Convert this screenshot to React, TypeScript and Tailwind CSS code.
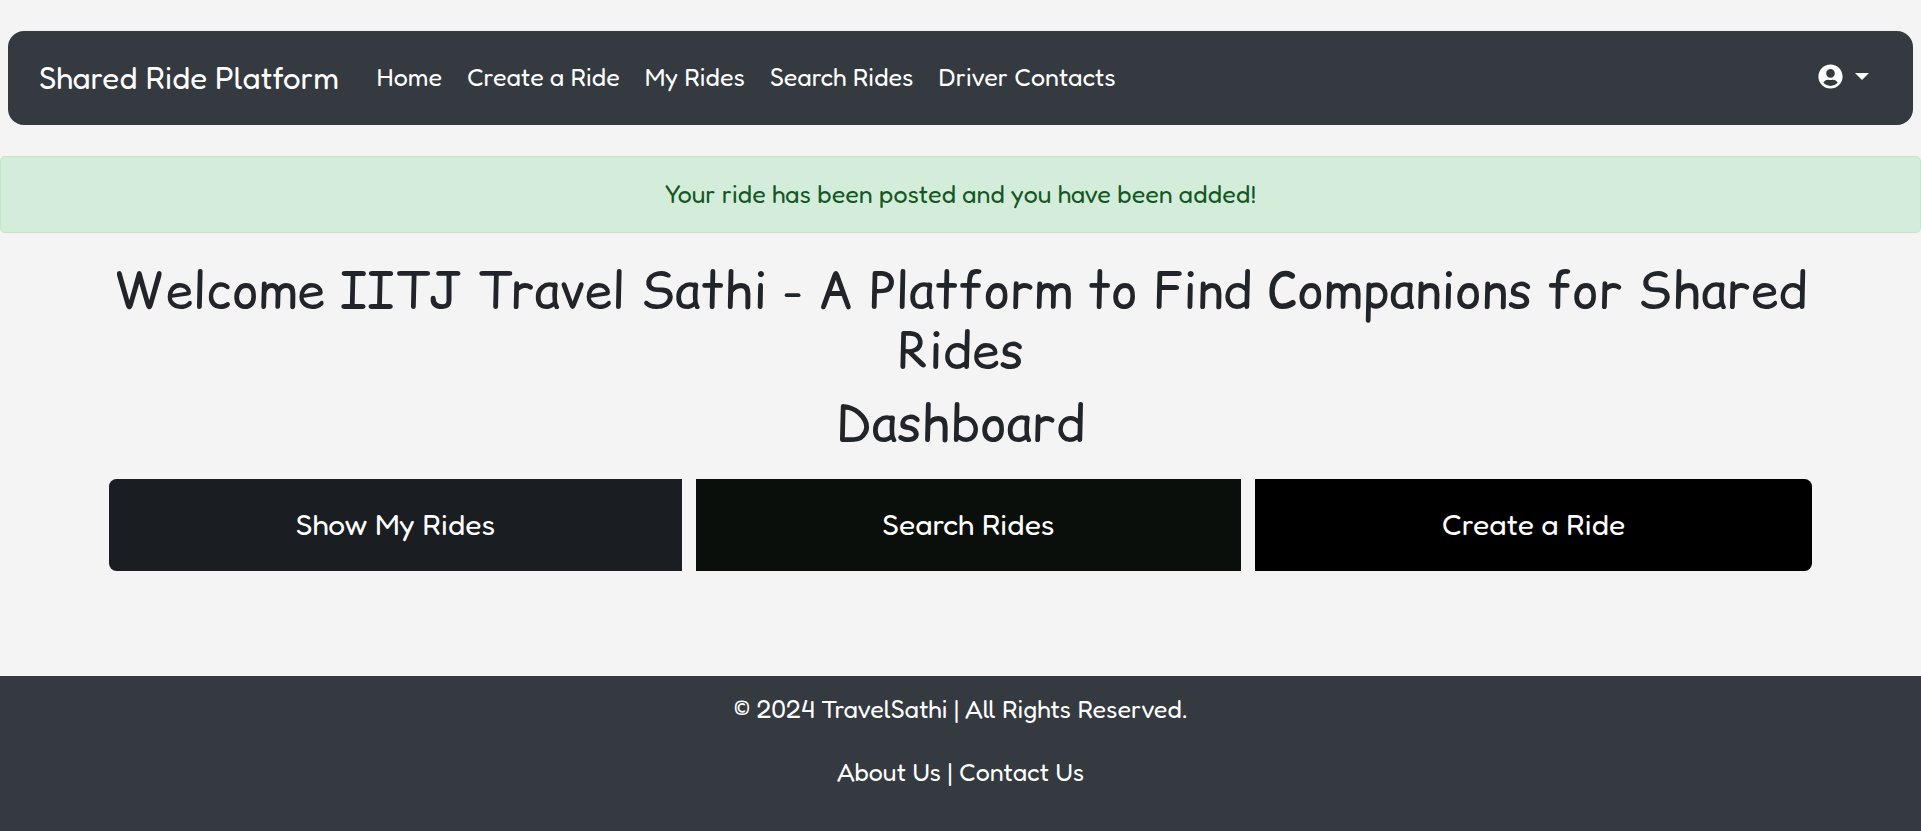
import { FaUserCircle } from "react-icons/fa";

const links = ["Home", "Create a Ride", "My Rides", "Search Rides", "Driver Contacts"];

function Navbar() {
  return (
    <nav className="mx-2 flex h-[94px] items-center rounded-2xl bg-[#343a40] px-[31px] text-white">
      <a href="#" className="mr-[25px] pb-px text-[31.25px] whitespace-nowrap">Shared Ride Platform</a>
      <ul className="flex grow items-center pb-px">
        {links.map((label) => (
          <li key={label}>
            <a href="#" className="block px-[12.5px] whitespace-nowrap">{label}</a>
          </li>
        ))}
      </ul>
      <button aria-label="Account" className="mr-[13px] flex items-center gap-3">
        <FaUserCircle className="mb-[3px] size-[25px]" />
        <span className="mb-[3px] h-0 w-0 border-x-[7px] border-t-[7px] border-x-transparent border-t-white" />
      </button>
    </nav>
  );
}

function Actions() {
  return (
    <div className="mt-[26px] flex h-[92px] gap-[14px] text-[30px] text-white">
      <button className="w-[573px] rounded-l-[7.5px] bg-[#1a1d21]">Show My Rides</button>
      <button className="w-[545px] bg-[#0a0f0b]">Search Rides</button>
      <button className="grow rounded-r-[7.5px] bg-black">Create a Ride</button>
    </div>
  );
}

export default function App() {
  return (
    <div className="flex h-[831px] flex-col overflow-hidden bg-[#f4f4f4] pt-[31px] font-['Fredoka','Lato',sans-serif] text-[25px] leading-[37.5px] text-[#212529]">
      <Navbar />
      <div className="mt-[31px] flex h-[77px] items-center justify-center rounded-[5px] border border-[#c3e6cb] bg-[#d4edda] text-[#155724]">
        Your ride has been posted and you have been added!
      </div>
      <main className="mx-[109px] grow pt-[27px]">
        <div className="text-center font-['Comic_Relief','Comic_Neue','Lato',cursive] text-[50px] leading-[60px]">
          <h1 className="mb-[13px]">
            Welcome IITJ Travel Sathi - A Platform to Find Companions for Shared Rides
          </h1>
          <h2>Dashboard</h2>
        </div>
        <Actions />
      </main>
      <footer className="h-[155px] bg-[#343a40] pt-[15px] text-center text-white">
        <p className="mb-[25px]">© 2024 TravelSathi | All Rights Reserved.</p>
        <p>
          <a href="#">About Us</a> | <a href="#">Contact Us</a>
        </p>
      </footer>
    </div>
  );
}
